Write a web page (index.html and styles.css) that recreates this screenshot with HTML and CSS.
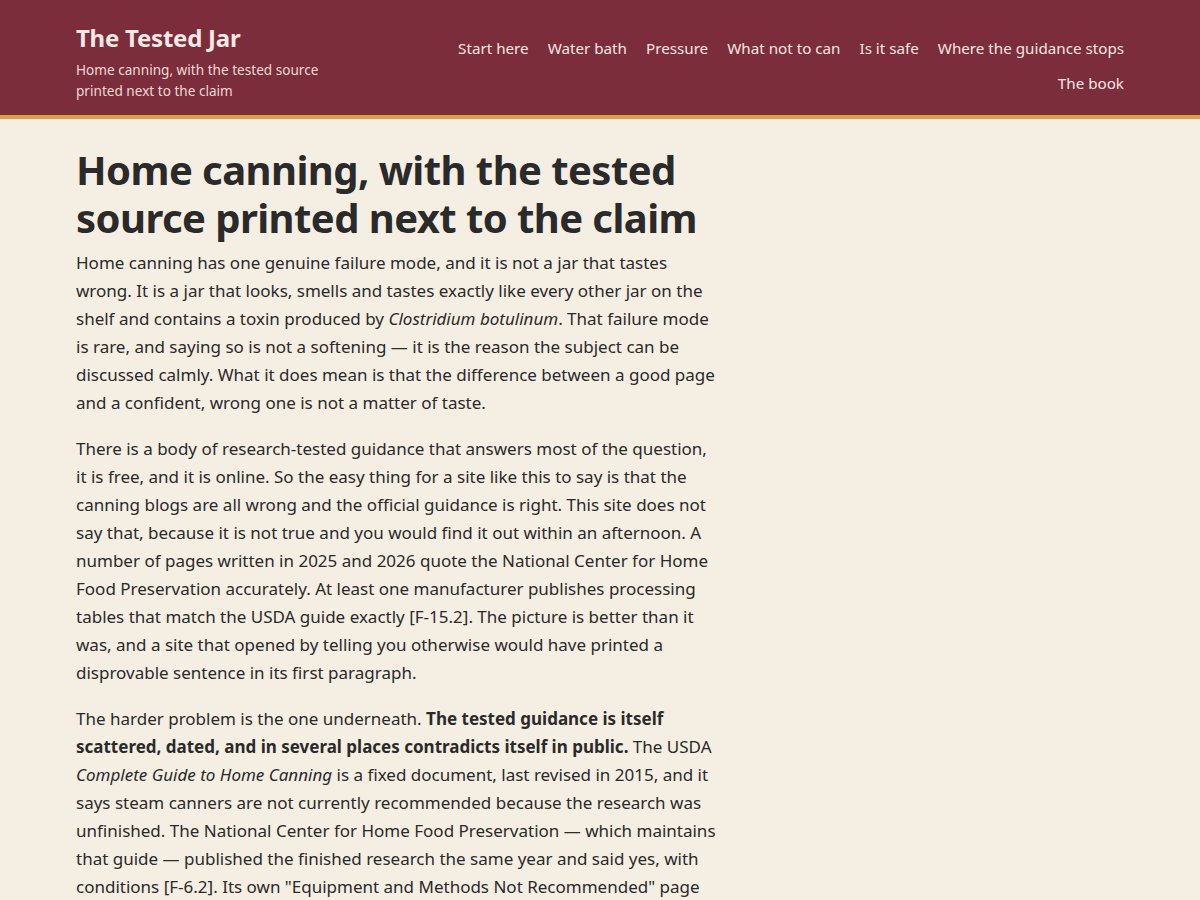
FILE: index.html
```html
<!DOCTYPE html>
<html lang="en">
<head>
<meta charset="utf-8">
<title>The Tested Jar</title>
<link rel="stylesheet" href="styles.css">
</head>
<body>
<header class="site-header">
  <div class="header-inner">
    <div class="brand">
      <div class="site-title">The Tested Jar</div>
      <div class="tagline">Home canning, with the tested source printed next to the claim</div>
    </div>
    <nav class="site-nav">
      <a href="#">Start here</a>
      <a href="#">Water bath</a>
      <a href="#">Pressure</a>
      <a href="#">What not to can</a>
      <a href="#">Is it safe</a>
      <a href="#">Where the guidance stops</a>
      <a href="#">The book</a>
    </nav>
  </div>
</header>
<main class="content">
  <h1>Home canning, with the tested source printed next to the claim</h1>
  <p>Home canning has one genuine failure mode, and it is not a jar that tastes wrong. It is a jar that looks, smells and tastes exactly like every other jar on the shelf and contains a toxin produced by <em>Clostridium botulinum</em>. That failure mode is rare, and saying so is not a softening — it is the reason the subject can be discussed calmly. What it does mean is that the difference between a good page and a confident, wrong one is not a matter of taste.</p>
  <p>There is a body of research-tested guidance that answers most of the question, it is free, and it is online. So the easy thing for a site like this to say is that the canning blogs are all wrong and the official guidance is right. This site does not say that, because it is not true and you would find it out within an afternoon. A number of pages written in 2025 and 2026 quote the National Center for Home Food Preservation accurately. At least one manufacturer publishes processing tables that match the USDA guide exactly [F-15.2]. The picture is better than it was, and a site that opened by telling you otherwise would have printed a disprovable sentence in its first paragraph.</p>
  <p>The harder problem is the one underneath. <strong>The tested guidance is itself scattered, dated, and in several places contradicts itself in public.</strong> The USDA <em>Complete Guide to Home Canning</em> is a fixed document, last revised in 2015, and it says steam canners are not currently recommended because the research was unfinished. The National Center for Home Food Preservation — which maintains that guide — published the finished research the same year and said yes, with conditions [F-6.2]. Its own "Equipment and Methods Not Recommended" page still lists steam canners, and so a reader who checks two official pages gets two answers.</p>
</main>
</body>
</html>
```

FILE: styles.css
```css
html, body {
  margin: 0;
  padding: 0;
}
body {
  background: #f5eee3;
  color: #2a2a2a;
  font-family: "Noto Sans", "Open Sans", sans-serif;
}
.site-header {
  background: #7b2d3b;
  border-bottom: 4px solid #dba042;
  color: #f7e7e3;
}
.header-inner {
  max-width: 1048px;
  margin: 0 auto;
  padding: 22px 0 14px;
  display: flex;
  justify-content: space-between;
  align-items: flex-start;
}
.site-title {
  font-size: 24px;
  font-weight: 700;
  line-height: 32px;
  letter-spacing: -0.01em;
  color: #f9e9e5;
}
.tagline {
  font-size: 13.6px;
  line-height: 21px;
  margin-top: 5px;
  max-width: 250px;
  color: #efd9d6;
}
.site-nav {
  display: flex;
  flex-wrap: wrap;
  justify-content: flex-end;
  column-gap: 19px;
  row-gap: 14px;
  max-width: 690px;
  padding-top: 16px;
}
.site-nav a {
  color: #f7e6e2;
  text-decoration: none;
  font-size: 15.2px;
  line-height: 21px;
}
.content {
  max-width: 1048px;
  margin: 0 auto;
  padding-top: 27px;
}
.content h1 {
  max-width: 640px;
  font-size: 40px;
  line-height: 48px;
  font-weight: 700;
  letter-spacing: -0.014em;
  margin: 0 0 7px;
  color: #2a2a2a;
}
.content p {
  max-width: 642px;
  font-size: 17px;
  line-height: 28px;
  margin: 0 0 18px;
}
```
